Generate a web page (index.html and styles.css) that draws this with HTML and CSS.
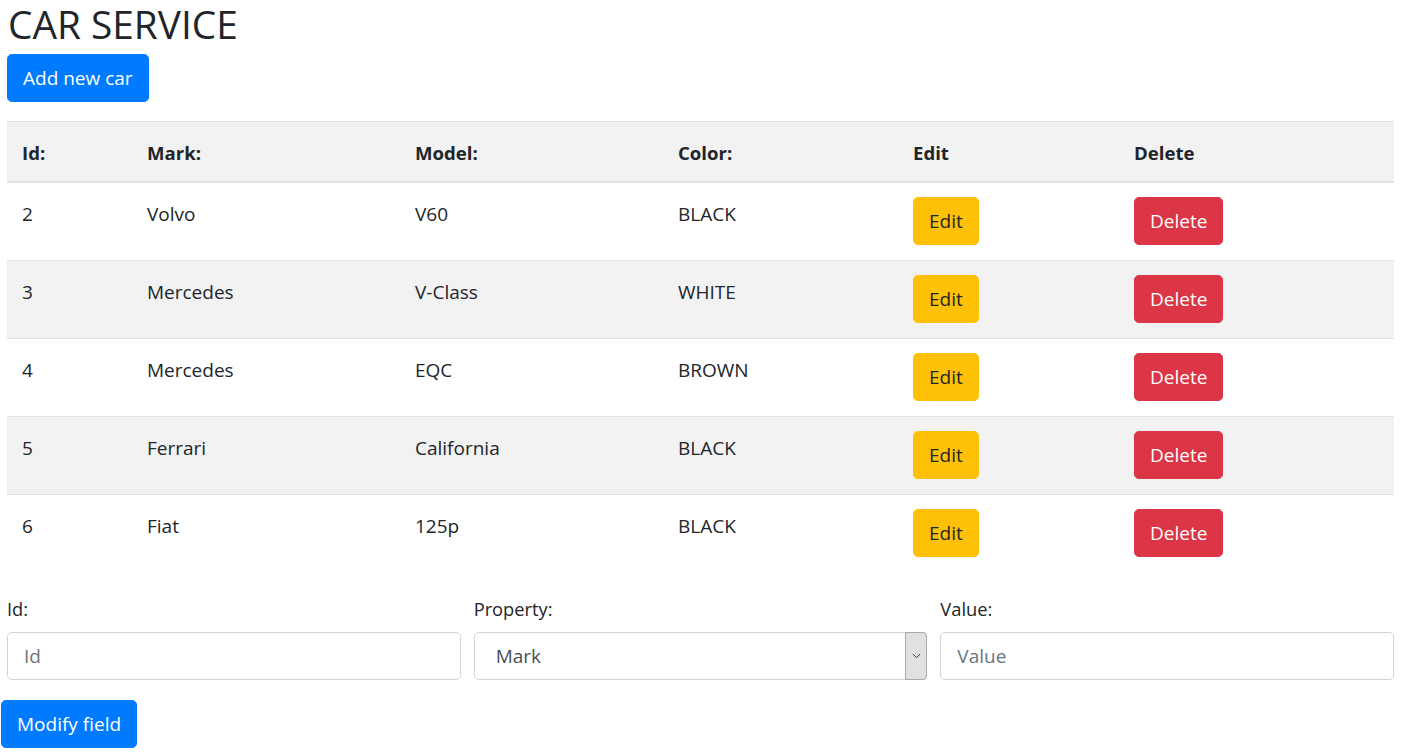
FILE: index.html
```html
<!DOCTYPE html>
<html lang="en">
<head>
<meta charset="utf-8">
<title>Car Service</title>
<link rel="stylesheet" href="styles.css">
</head>
<body>
<main class="page">
  <h1 class="title">CAR SERVICE</h1>
  <button class="btn btn-lg btn-primary">Add new car</button>

  <table class="cars">
    <colgroup>
      <col class="c-id"><col class="c-mark"><col class="c-model"><col class="c-color"><col class="c-edit"><col class="c-del">
    </colgroup>
    <thead>
      <tr><th>Id:</th><th>Mark:</th><th>Model:</th><th>Color:</th><th>Edit</th><th>Delete</th></tr>
    </thead>
    <tbody>
      <tr><td><span class="txt">2</span></td><td><span class="txt">Volvo</span></td><td><span class="txt">V60</span></td><td><span class="txt">BLACK</span></td><td><button class="btn btn-lg btn-warning">Edit</button></td><td><button class="btn btn-lg btn-danger">Delete</button></td></tr>
      <tr class="alt"><td><span class="txt">3</span></td><td><span class="txt">Mercedes</span></td><td><span class="txt">V-Class</span></td><td><span class="txt">WHITE</span></td><td><button class="btn btn-lg btn-warning">Edit</button></td><td><button class="btn btn-lg btn-danger">Delete</button></td></tr>
      <tr><td><span class="txt">4</span></td><td><span class="txt">Mercedes</span></td><td><span class="txt">EQC</span></td><td><span class="txt">BROWN</span></td><td><button class="btn btn-lg btn-warning">Edit</button></td><td><button class="btn btn-lg btn-danger">Delete</button></td></tr>
      <tr class="alt"><td><span class="txt">5</span></td><td><span class="txt">Ferrari</span></td><td><span class="txt">California</span></td><td><span class="txt">BLACK</span></td><td><button class="btn btn-lg btn-warning">Edit</button></td><td><button class="btn btn-lg btn-danger">Delete</button></td></tr>
      <tr><td><span class="txt">6</span></td><td><span class="txt">Fiat</span></td><td><span class="txt">125p</span></td><td><span class="txt">BLACK</span></td><td><button class="btn btn-lg btn-warning">Edit</button></td><td><button class="btn btn-lg btn-danger">Delete</button></td></tr>
    </tbody>
  </table>

  <form class="modify">
    <div class="field">
      <label class="lbl" for="fid">Id:</label>
      <input class="ctl" id="fid" type="text" placeholder="Id">
    </div>
    <div class="field">
      <label class="lbl" for="fprop">Property:</label>
      <div class="select-wrap">
        <select class="ctl sel" id="fprop">
          <option>Mark</option>
          <option>Model</option>
          <option>Color</option>
        </select>
        <span class="sel-arrow"><svg width="9" height="6" viewBox="0 0 9 6"><path d="M0.8 1 L4.5 4.6 L8.2 1" fill="none" stroke="#333" stroke-width="1"/></svg></span>
      </div>
    </div>
    <div class="field">
      <label class="lbl" for="fval">Value:</label>
      <input class="ctl" id="fval" type="text" placeholder="Value">
    </div>
  </form>
  <button class="btn btn-lg btn-primary btn-modify">Modify field</button>
</main>
</body>
</html>
```

FILE: styles.css
```css
* { box-sizing: border-box; }
html, body { margin: 0; padding: 0; background: #fff; }
body {
  font-family: "Open Sans", "Noto Sans", "Liberation Sans", sans-serif;
  font-size: 16px;
  line-height: 1.5;
  color: #212529;
}
.page { padding: 0 16px 0 7px; width: 1410px; }
.title {
  margin: -3px 0 3px 1px;
  font-size: 38.8px;
  font-weight: 400;
  line-height: 54px;
}
.btn {
  display: inline-block;
  font-family: inherit;
  border: 1px solid transparent;
  cursor: pointer;
  font-weight: 400;
}
.btn-lg {
  font-size: 19px;
  line-height: 30px;
  padding: 8px 15px;
  border-radius: 4.8px;
  height: 48px;
}
.btn-primary { background: #007bff; border-color: #007bff; color: #fff; }
.btn-warning { background: #ffc107; border-color: #ffc107; color: #212529; }
.btn-danger { background: #dc3545; border-color: #dc3545; color: #fff; }

.cars {
  margin-top: 19px;
  width: 1387px;
  border-collapse: collapse;
  table-layout: fixed;
  font-size: 19px;
  line-height: 30px;
}
.c-id { width: 125px; }
.c-mark { width: 268px; }
.c-model { width: 263px; }
.c-color { width: 235px; }
.c-edit { width: 221px; }
.c-del { width: 275px; }
.cars th {
  text-align: left;
  font-weight: 700;
  font-size: 18.6px;
  padding: 16px 15px 13px;
  background: #f2f2f2;
  border-top: 1px solid #dee2e6;
  border-bottom: 2px solid #dee2e6;
}
.cars td {
  padding: 14px 15px 15px;
  border-top: 1px solid #dee2e6;
  vertical-align: top;
}
.cars tbody tr:first-child td { border-top: 0; }
.cars tr.alt td { background: #f2f2f2; }
.txt { display: block; padding-top: 2px; }

.modify {
  margin-top: 23px;
  width: 1387px;
  display: grid;
  grid-template-columns: 1fr 1fr 1fr;
  column-gap: 13px;
}
.lbl {
  display: block;
  font-size: 18.3px;
  line-height: 27.5px;
  margin-bottom: 9.5px;
}
.ctl {
  display: block;
  width: 100%;
  height: 48px;
  padding: 8px 16px;
  font-family: inherit;
  font-size: 19px;
  line-height: 30px;
  color: #495057;
  background: #fff;
  border: 1px solid #ced4da;
  border-radius: 4.8px;
  outline: none;
}
.ctl::placeholder { color: #6c757d; opacity: 1; }
.select-wrap { position: relative; }
.sel {
  appearance: none;
  -webkit-appearance: none;
  padding-left: 21px;
}
.sel-arrow {
  position: absolute;
  right: 0;
  top: 0;
  bottom: 0;
  width: 22px;
  background: #e1e1e1;
  border: 1px solid #a9a9a9;
  border-radius: 0 4px 4px 0;
  display: flex;
  align-items: center;
  justify-content: center;
  pointer-events: none;
}
.btn-modify { margin: 20px 0 0 -6px; }
```
